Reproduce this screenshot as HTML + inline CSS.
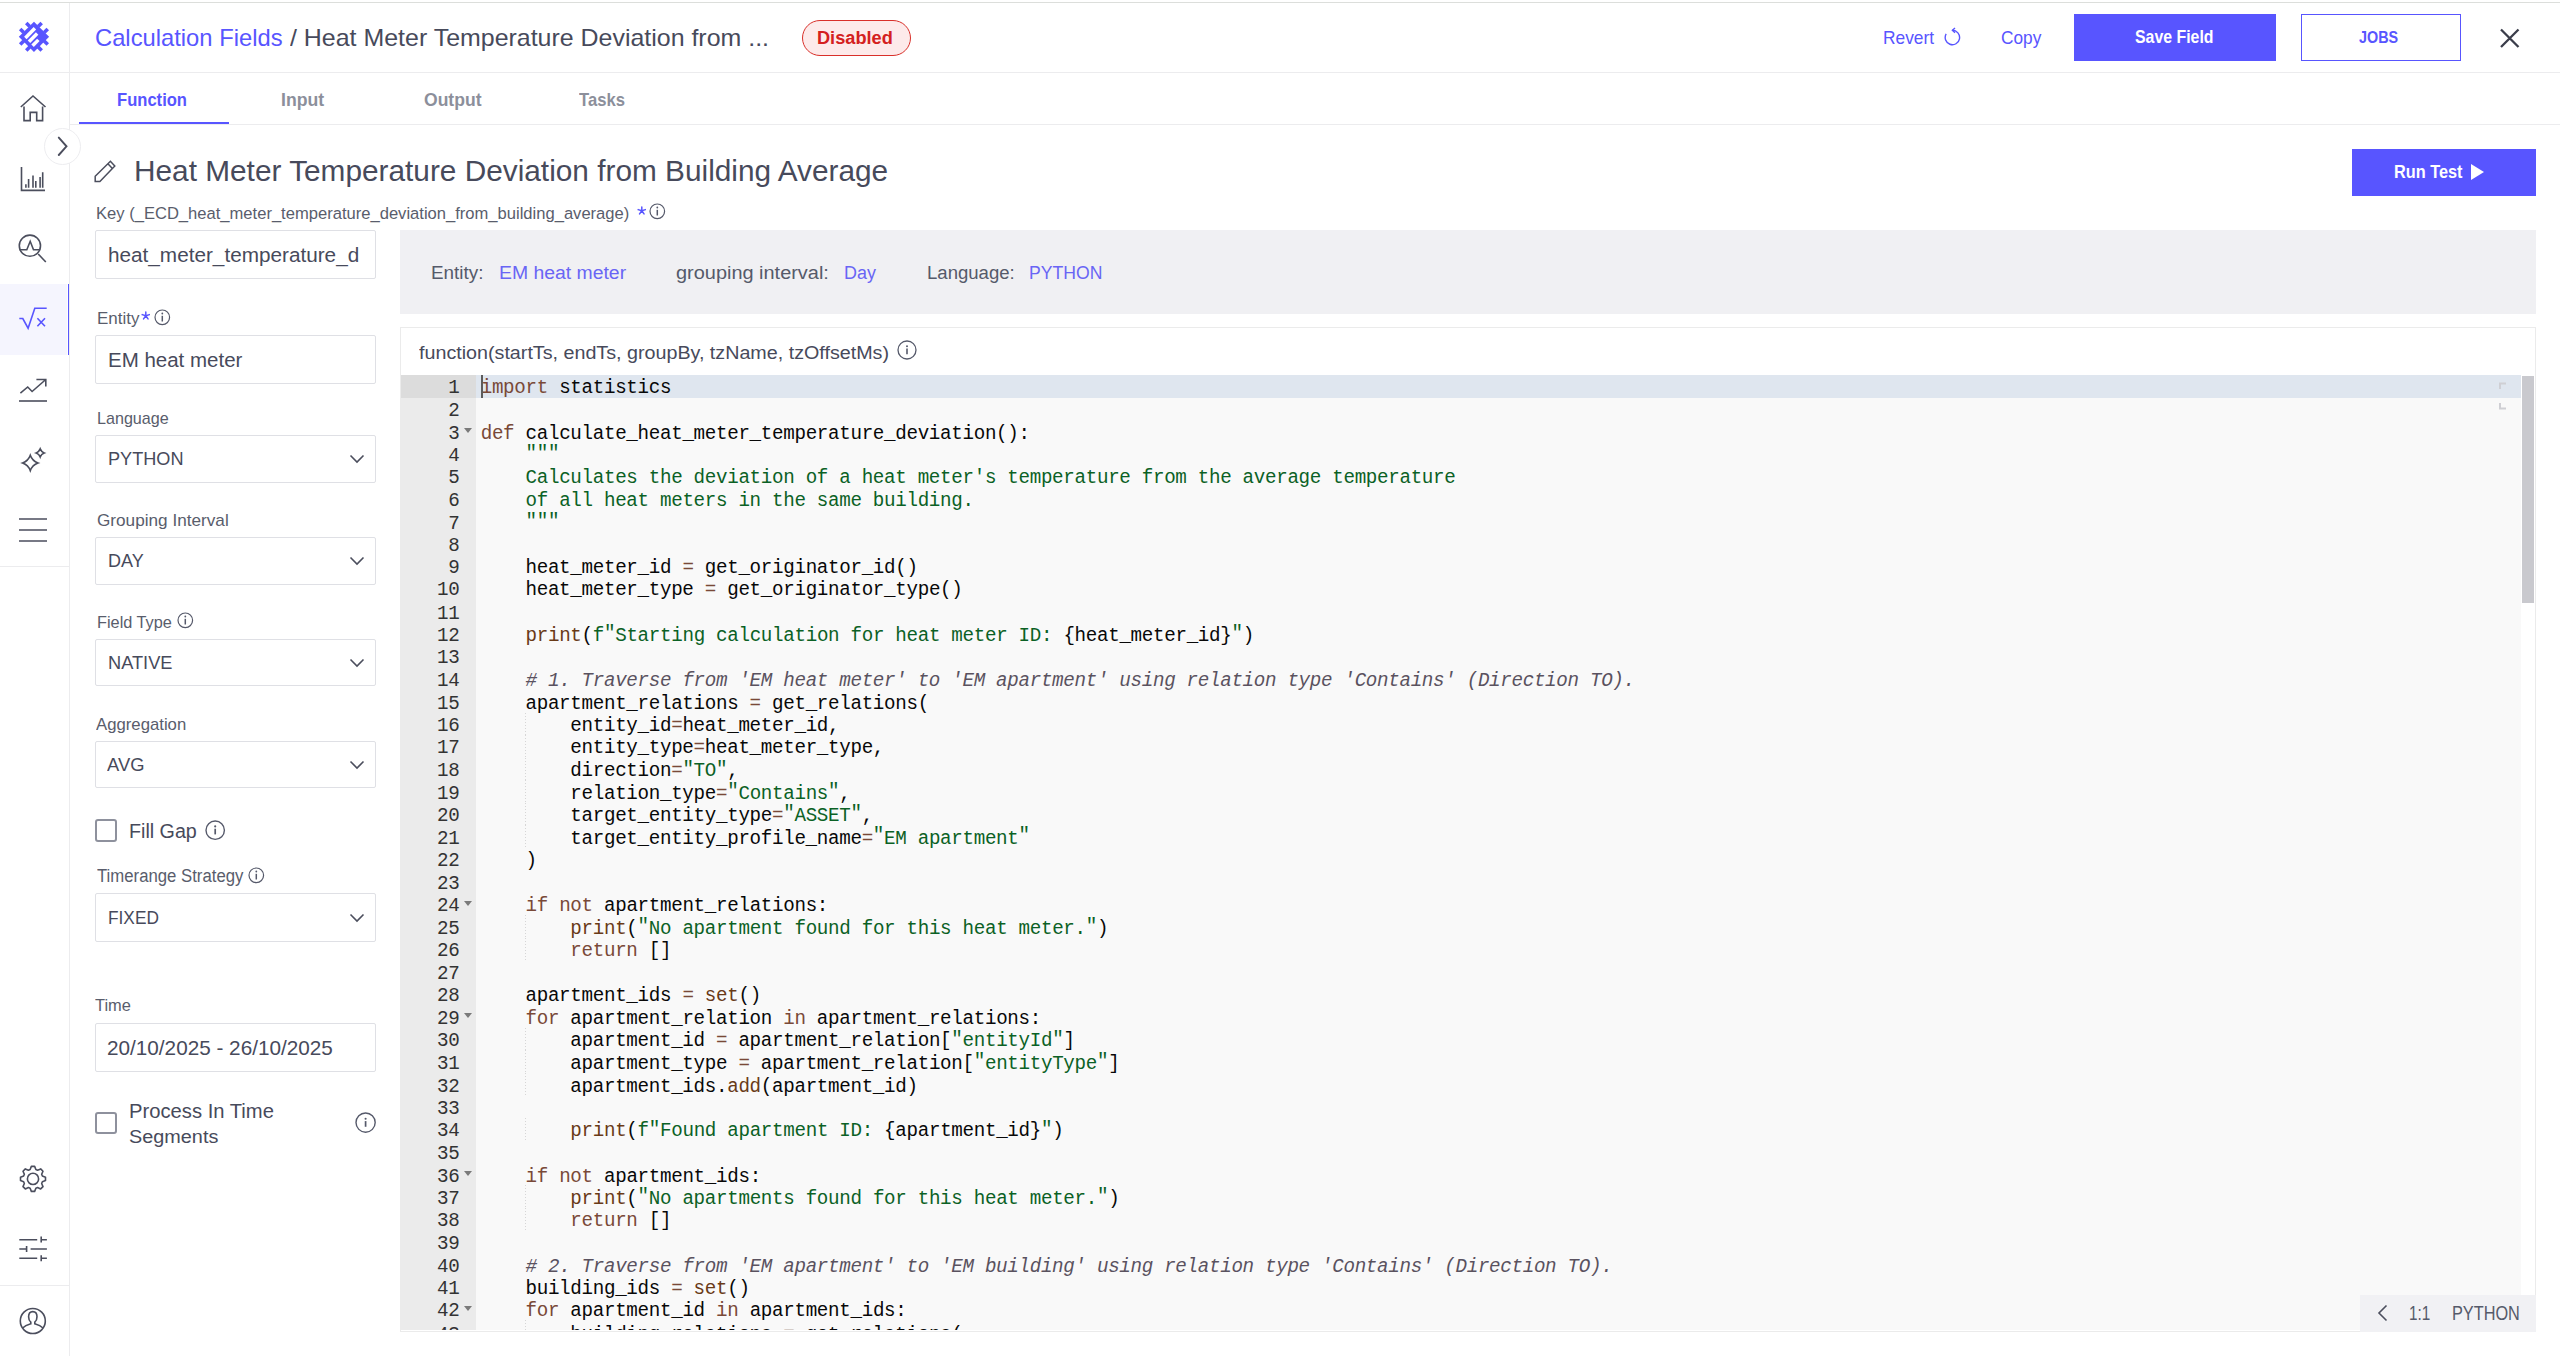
<!DOCTYPE html>
<html><head><meta charset="utf-8"><title>Calculation Field</title><style>
*{margin:0;padding:0}
html,body{width:2560px;height:1356px;overflow:hidden;background:#fff;position:relative;font-family:"Liberation Sans", sans-serif}
.r{position:absolute}
.t{position:absolute;white-space:nowrap;line-height:1;font-family:"Liberation Sans", sans-serif}
.gn{left:0;width:58.5px;text-align:right;font-family:"Liberation Mono", monospace;font-size:19.2px;letter-spacing:-0.31px;line-height:22.5px;color:#333;white-space:pre}
.cl{font-family:"Liberation Mono", monospace;font-size:19.2px;letter-spacing:-0.31px;line-height:22.5px;color:#080808;white-space:pre}
.q{font-style:normal;position:relative;top:-1.8px}
.k{color:#794938}
.f{color:#693a17}
.s{color:#0b6125}
.c{color:#5a525f;font-style:italic}
.guide{width:1px;background:repeating-linear-gradient(to bottom,#d6d6d6 0 1px,transparent 1px 3px)}
</style></head>
<body>
<div class="r" style="left:0px;top:2px;width:2560px;height:1px;background:#dcdedb"></div>
<div class="r" style="left:69px;top:3px;width:1px;height:1353px;background:#ececee"></div>
<div class="r" style="left:0px;top:72px;width:2560px;height:1px;background:#ececee"></div>
<div class="r" style="left:70px;top:124px;width:2490px;height:1px;background:#ececee"></div>
<div class="r" style="left:0px;top:566px;width:69px;height:1px;background:#ececee"></div>
<div class="r" style="left:0px;top:1285px;width:69px;height:1px;background:#ececee"></div>
<div class="r" style="left:0px;top:284px;width:67px;height:71px;background:#f5f5fe"></div>
<div class="r" style="left:68px;top:284px;width:1px;height:71px;background:#5855ff"></div>
<svg class="r" style="left:14px;top:17px" width="40" height="40" viewBox="0 0 40 40"><g transform="translate(19.97,19.76) rotate(45)"><rect x="-10.7" y="-10.7" width="21.40" height="21.40" fill="#5855ff"/><rect x="-6.05" y="10.2" width="3.55" height="5.00" fill="#5855ff"/><rect x="-6.05" y="-15.2" width="3.55" height="5.00" fill="#5855ff"/><rect x="10.2" y="-6.05" width="5.00" height="3.55" fill="#5855ff"/><rect x="-15.2" y="-6.05" width="5.00" height="3.55" fill="#5855ff"/><rect x="2.5" y="10.2" width="3.55" height="5.00" fill="#5855ff"/><rect x="2.5" y="-15.2" width="3.55" height="5.00" fill="#5855ff"/><rect x="10.2" y="2.5" width="5.00" height="3.55" fill="#5855ff"/><rect x="-15.2" y="2.5" width="5.00" height="3.55" fill="#5855ff"/><rect x="-7.05" y="-6.6" width="3.50" height="13.50" fill="#fff"/><rect x="-1.75" y="-4.5" width="3.50" height="11.50" fill="#fff"/><rect x="3.55" y="-0.9" width="3.50" height="8.20" fill="#fff"/></g></svg>
<svg class="r" style="left:19px;top:94px" width="28" height="28" viewBox="0 0 28 28"><path fill="none" stroke="#4b4e5d" stroke-width="1.6" d="M1.8 13 L14 2 L26.5 13 M5 12.5 V26.6 H11.2 V18.4 H17.7 V26.6 H23.6 V12.5" stroke-linejoin="miter"/></svg>
<svg class="r" style="left:19px;top:165px" width="28" height="28" viewBox="0 0 28 28"><path fill="none" stroke="#4b4e5d" stroke-width="1.6" d="M2.5 2 V25.4 H26"/><path fill="none" stroke="#4b4e5d" stroke-width="1.6" stroke-width="1.8" d="M6.9 22.7 V19.2 M9.6 22.7 V13.9 M14 22.7 V10.4 M16.8 22.7 V16.1 M21.1 22.7 V12.1 M23.7 22.7 V7.3"/></svg>
<svg class="r" style="left:17px;top:233px" width="32" height="32" viewBox="0 0 32 32"><circle fill="none" stroke="#4b4e5d" stroke-width="1.6" cx="12.9" cy="12.7" r="10.6"/><path fill="none" stroke="#4b4e5d" stroke-width="1.6" d="M21.2 21 L28.8 29"/><path fill="none" stroke="#4b4e5d" stroke-width="1.6" stroke-width="1.2" d="M2.5 16.7 H9.8 L13.2 8.3 L16.5 16.7 H23.3"/></svg>
<svg class="r" style="left:17px;top:305px" width="32" height="28" viewBox="0 0 32 28"><path fill="none" stroke="#5855ff" stroke-width="1.6" d="M2.3 13.5 H5.8 L11.1 23.2 L17.8 3.3 H29.7"/><path fill="none" stroke="#5855ff" stroke-width="1.6" d="M20.4 13.2 L28 21.2 M28 13.2 L20.4 21.2"/></svg>
<svg class="r" style="left:18px;top:376px" width="30" height="28" viewBox="0 0 30 28"><path fill="none" stroke="#4b4e5d" stroke-width="1.6" d="M1 25 H29"/><path fill="none" stroke="#4b4e5d" stroke-width="1.6" d="M2.4 17.2 L9.7 11 L14.1 15.5 L27.8 3.5 M18.4 3.5 H27.8 V10.6"/></svg>
<svg class="r" style="left:19px;top:446px" width="28" height="28" viewBox="0 0 28 28"><path fill="none" stroke="#4b4e5d" stroke-width="1.6" stroke-width="1.25" stroke-linejoin="miter" stroke-miterlimit="30" d="M11.3 9.3 Q13.3 15.0 19.0 17.0 Q13.3 19.0 11.3 24.7 Q9.3 19.0 3.6000000000000005 17.0 Q9.3 15.0 11.3 9.3 Z"/><path fill="none" stroke="#4b4e5d" stroke-width="1.6" stroke-width="1.2" stroke-linejoin="miter" stroke-miterlimit="30" d="M21.2 2.9000000000000004 Q22.3 5.800000000000001 25.2 6.9 Q22.3 8.0 21.2 10.9 Q20.099999999999998 8.0 17.2 6.9 Q20.099999999999998 5.800000000000001 21.2 2.9000000000000004 Z"/></svg>
<svg class="r" style="left:18px;top:516px" width="30" height="28" viewBox="0 0 30 28"><path fill="none" stroke="#4b4e5d" stroke-width="1.6" d="M1 3 H29 M1 14 H29 M1 25 H29" stroke-width="1.8"/></svg>
<svg class="r" style="left:18px;top:1164px" width="30" height="30" viewBox="0 0 30 30"><path fill="none" stroke="#4b4e5d" stroke-width="1.6" stroke-width="1.5" d="M12.13 5.53 L13.36 2.41 L16.64 2.41 L17.87 5.53 L19.60 6.25 L22.67 4.90 L25.00 7.23 L23.65 10.30 L24.37 12.03 L27.49 13.26 L27.49 16.54 L24.37 17.77 L23.65 19.50 L25.00 22.57 L22.67 24.90 L19.60 23.55 L17.87 24.27 L16.64 27.39 L13.36 27.39 L12.13 24.27 L10.40 23.55 L7.33 24.90 L5.00 22.57 L6.35 19.50 L5.63 17.77 L2.51 16.54 L2.51 13.26 L5.63 12.03 L6.35 10.30 L5.00 7.23 L7.33 4.90 L10.40 6.25 Z" stroke-linejoin="round"/><circle fill="none" stroke="#4b4e5d" stroke-width="1.6" stroke-width="1.5" cx="15" cy="14.9" r="5.6"/></svg>
<svg class="r" style="left:18px;top:1234px" width="30" height="30" viewBox="0 0 30 30"><path fill="none" stroke="#4b4e5d" stroke-width="1.6" stroke-width="1.9" d="M1.3 5.7 H19.2 M23.2 5.7 H28.9 M23.2 2.6 V8.4 M1.3 15 H9.3 M12.6 15 H28.9 M8.6 12 V18 M1.3 24.3 H19.2 M23.2 24.3 H28.9 M23.2 21.3 V27.2"/></svg>
<svg class="r" style="left:19px;top:1307px" width="28" height="28" viewBox="0 0 28 28"><circle fill="none" stroke="#4b4e5d" stroke-width="1.6" stroke-width="1.3" cx="13.8" cy="14" r="12.5"/><path fill="none" stroke="#4b4e5d" stroke-width="1.6" stroke-width="1.3" d="M13.8 4.6 C10.6 4.6 9.6 7.2 9.6 9.8 C9.6 12.4 10.8 14.4 11.8 15.2 V16.8 C8.4 17.8 5.6 19 3.6 21 M13.8 4.6 C17 4.6 18 7.2 18 9.8 C18 12.4 16.8 14.4 15.8 15.2 V16.8 C19.2 17.8 22 19 24 21"/></svg>
<div class="r" style="left:44.1px;top:128.1px;width:37.4px;height:37.4px;border-radius:50%;background:#fff;border:1px solid #ededf0;box-sizing:border-box"></div>
<svg class="r" style="left:55px;top:136px" width="20" height="20" viewBox="0 0 20 20"><path fill="none" stroke="#4b4e5d" stroke-width="1.9" stroke-linecap="round" d="M3.8 1.6 L11.5 10.3 L3.8 19"/></svg>
<div class="t " style="left:95.20px;top:26.00px;font-size:24.0px;color:#5855ff;letter-spacing:0px;transform:scaleX(0.9899);transform-origin:0 0;">Calculation Fields</div>
<div class="t " style="left:289.80px;top:26.00px;font-size:24.0px;color:#474a5b;letter-spacing:0px;transform:scaleX(1.0389);transform-origin:0 0;">/ Heat Meter Temperature Deviation from ...</div>
<div class="r" style="left:802px;top:20px;width:109px;height:36px;border-radius:18px;background:#fdeaea;border:1px solid #d9302a;box-sizing:border-box"></div>
<div class="t " style="left:816.80px;top:28.00px;font-size:19.2px;color:#d42020;font-weight:bold;letter-spacing:0px;transform:scaleX(0.9472);transform-origin:0 0;">Disabled</div>
<div class="t " style="left:1882.50px;top:28.00px;font-size:19.0px;color:#5855ff;letter-spacing:0px;transform:scaleX(0.913);transform-origin:0 0;">Revert</div>
<svg class="r" style="left:1942px;top:26px" width="20" height="20" viewBox="0 0 20 20"><path fill="none" stroke="#5855ff" stroke-width="1.4" d="M10.40 4.30 A7.2 7.2 0 1 1 4.16 7.90"/><path fill="none" stroke="#5855ff" stroke-width="1.4" d="M13.00 1.90 L10.40 4.30 L13.00 6.70"/></svg>
<div class="t " style="left:2000.80px;top:28.00px;font-size:19.0px;color:#5855ff;letter-spacing:0px;transform:scaleX(0.9085);transform-origin:0 0;">Copy</div>
<div class="r" style="left:2074px;top:14px;width:202px;height:47px;background:#5855ff"></div>
<div class="t " style="left:2134.70px;top:29.00px;font-size:17.9px;color:#ffffff;font-weight:bold;letter-spacing:0px;transform:scaleX(0.887);transform-origin:0 0;">Save Field</div>
<div class="r" style="left:2301px;top:14px;width:160px;height:47px;border:1.5px solid #5855ff;box-sizing:border-box"></div>
<div class="t " style="left:2359.10px;top:29.00px;font-size:17.0px;color:#5855ff;font-weight:bold;letter-spacing:0px;transform:scaleX(0.8445);transform-origin:0 0;">JOBS</div>
<svg class="r" style="left:2498px;top:26px" width="24" height="24" viewBox="0 0 24 24"><path fill="none" stroke="#3a3d4a" stroke-width="2.3" d="M3 3.5 L20.5 21 M20.5 3.5 L3 21"/></svg>
<div class="t " style="left:117.40px;top:90.00px;font-size:19.0px;color:#5855ff;font-weight:bold;letter-spacing:0px;transform:scaleX(0.8728);transform-origin:0 0;">Function</div>
<div class="t " style="left:281.00px;top:90.00px;font-size:19.0px;color:#8c8f9b;font-weight:bold;letter-spacing:0px;transform:scaleX(0.9284);transform-origin:0 0;">Input</div>
<div class="t " style="left:423.70px;top:90.00px;font-size:19.0px;color:#8c8f9b;font-weight:bold;letter-spacing:0px;transform:scaleX(0.9237);transform-origin:0 0;">Output</div>
<div class="t " style="left:579.00px;top:90.00px;font-size:19.0px;color:#8c8f9b;font-weight:bold;letter-spacing:0px;transform:scaleX(0.8748);transform-origin:0 0;">Tasks</div>
<div class="r" style="left:79px;top:122px;width:150px;height:2px;background:#5855ff"></div>
<svg class="r" style="left:93px;top:160px" width="24" height="24" viewBox="0 0 24 24"><path fill="none" stroke="#4b4e5d" stroke-width="1.5" stroke-linejoin="miter" d="M2.2 16.2 L17.4 1.3 L21.8 6.1 L6.9 21.4 H2.2 Z M14.9 3.8 L19.4 8.6"/></svg>
<div class="t " style="left:134.20px;top:156.00px;font-size:29.5px;color:#474a5b;letter-spacing:0px;transform:scaleX(1.0101);transform-origin:0 0;">Heat Meter Temperature Deviation from Building Average</div>
<div class="r" style="left:2352px;top:149px;width:184px;height:47px;background:#5855ff"></div>
<div class="t " style="left:2394.20px;top:164.00px;font-size:17.9px;color:#ffffff;font-weight:bold;letter-spacing:0px;transform:scaleX(0.9109);transform-origin:0 0;">Run Test</div>
<svg class="r" style="left:2470px;top:163px" width="16" height="18" viewBox="0 0 16 18"><path fill="#fff" d="M1 1 L14 9 L1 17 Z"/></svg>
<div class="t " style="left:96.30px;top:205.00px;font-size:17.1px;color:#595d6c;letter-spacing:0px;transform:scaleX(0.9693);transform-origin:0 0;">Key (_ECD_heat_meter_temperature_deviation_from_building_average)</div>
<svg class="r" style="left:636.7px;top:205.7px" width="9.6" height="9.6" viewBox="0 0 9.6 9.6"><path d="M4.8 4.8 L4.80 1.00 M4.8 4.8 L8.41 3.63 M4.8 4.8 L7.03 7.87 M4.8 4.8 L2.57 7.87 M4.8 4.8 L1.19 3.63 " stroke="#5855ff" stroke-width="1.5" stroke-linecap="round"/></svg>
<svg class="r" style="left:648.2px;top:202.2px" width="18.6" height="18.6" viewBox="0 0 18.6 18.6"><circle cx="9.3" cy="9.3" r="7.3" fill="none" stroke="#55596a" stroke-width="1.2"/><path d="M9.3 7.800000000000001 V13.5" stroke="#55596a" stroke-width="1.5"/><circle cx="9.3" cy="5.500000000000001" r="0.8999999999999999" fill="#55596a"/></svg>
<div class="r" style="left:95px;top:230px;width:281px;height:49px;border:1.5px solid #dfe0e5;border-radius:2px;box-sizing:border-box;background:#fff"></div>
<div class="t " style="left:107.70px;top:246.00px;font-size:19.3px;color:#474a5b;letter-spacing:0px;transform:scaleX(1.0751);transform-origin:0 0;">heat_meter_temperature_d</div>
<div class="t " style="left:96.50px;top:310.00px;font-size:17.2px;color:#595d6c;letter-spacing:0px;transform:scaleX(0.9887);transform-origin:0 0;">Entity</div>
<svg class="r" style="left:140.7px;top:310.7px" width="9.6" height="9.6" viewBox="0 0 9.6 9.6"><path d="M4.8 4.8 L4.80 1.00 M4.8 4.8 L8.41 3.63 M4.8 4.8 L7.03 7.87 M4.8 4.8 L2.57 7.87 M4.8 4.8 L1.19 3.63 " stroke="#5855ff" stroke-width="1.5" stroke-linecap="round"/></svg>
<svg class="r" style="left:152.7px;top:307.7px" width="18.6" height="18.6" viewBox="0 0 18.6 18.6"><circle cx="9.3" cy="9.3" r="7.3" fill="none" stroke="#55596a" stroke-width="1.2"/><path d="M9.3 7.800000000000001 V13.5" stroke="#55596a" stroke-width="1.5"/><circle cx="9.3" cy="5.500000000000001" r="0.8999999999999999" fill="#55596a"/></svg>
<div class="r" style="left:95px;top:335px;width:281px;height:49px;border:1.5px solid #dfe0e5;border-radius:2px;box-sizing:border-box;background:#fff"></div>
<div class="t " style="left:108.30px;top:351.00px;font-size:19.3px;color:#474a5b;letter-spacing:0px;transform:scaleX(1.0628);transform-origin:0 0;">EM heat meter</div>
<div class="t " style="left:96.50px;top:410.00px;font-size:17.0px;color:#595d6c;letter-spacing:0px;transform:scaleX(0.9479);transform-origin:0 0;">Language</div>
<div class="r" style="left:95px;top:435.4px;width:281px;height:47.200000000000045px;border:1.5px solid #dfe0e5;border-radius:2px;box-sizing:border-box;background:#fff"></div>
<div class="t " style="left:108.40px;top:450.00px;font-size:18.9px;color:#474a5b;letter-spacing:0px;transform:scaleX(0.9591);transform-origin:0 0;">PYTHON</div>
<svg class="r" style="left:348px;top:453.0px" width="18" height="12" viewBox="0 0 18 12"><path fill="none" stroke="#4b4e5d" stroke-width="1.6" d="M2.5 2.5 L9 9 L15.5 2.5"/></svg>
<div class="t " style="left:96.50px;top:512.00px;font-size:17.0px;color:#595d6c;letter-spacing:0px;transform:scaleX(1.0099);transform-origin:0 0;">Grouping Interval</div>
<div class="r" style="left:95px;top:537.4px;width:281px;height:47.200000000000045px;border:1.5px solid #dfe0e5;border-radius:2px;box-sizing:border-box;background:#fff"></div>
<div class="t " style="left:108.40px;top:552.00px;font-size:18.9px;color:#474a5b;letter-spacing:0px;transform:scaleX(0.9536);transform-origin:0 0;">DAY</div>
<svg class="r" style="left:348px;top:555.0px" width="18" height="12" viewBox="0 0 18 12"><path fill="none" stroke="#4b4e5d" stroke-width="1.6" d="M2.5 2.5 L9 9 L15.5 2.5"/></svg>
<div class="t " style="left:96.50px;top:614.00px;font-size:17.0px;color:#595d6c;letter-spacing:0px;transform:scaleX(0.9587);transform-origin:0 0;">Field Type</div>
<svg class="r" style="left:176.29999999999998px;top:611.0px" width="18.6" height="18.6" viewBox="0 0 18.6 18.6"><circle cx="9.3" cy="9.3" r="7.3" fill="none" stroke="#55596a" stroke-width="1.2"/><path d="M9.3 7.800000000000001 V13.5" stroke="#55596a" stroke-width="1.5"/><circle cx="9.3" cy="5.500000000000001" r="0.8999999999999999" fill="#55596a"/></svg>
<div class="r" style="left:95px;top:639.2px;width:281px;height:47.19999999999993px;border:1.5px solid #dfe0e5;border-radius:2px;box-sizing:border-box;background:#fff"></div>
<div class="t " style="left:108.40px;top:654.00px;font-size:18.9px;color:#474a5b;letter-spacing:0px;transform:scaleX(0.9652);transform-origin:0 0;">NATIVE</div>
<svg class="r" style="left:348px;top:656.8px" width="18" height="12" viewBox="0 0 18 12"><path fill="none" stroke="#4b4e5d" stroke-width="1.6" d="M2.5 2.5 L9 9 L15.5 2.5"/></svg>
<div class="t " style="left:95.90px;top:716.00px;font-size:17.0px;color:#595d6c;letter-spacing:0px;transform:scaleX(0.9838);transform-origin:0 0;">Aggregation</div>
<div class="r" style="left:95px;top:741.3px;width:281px;height:47.200000000000045px;border:1.5px solid #dfe0e5;border-radius:2px;box-sizing:border-box;background:#fff"></div>
<div class="t " style="left:107.20px;top:756.00px;font-size:18.9px;color:#474a5b;letter-spacing:0px;transform:scaleX(0.9718);transform-origin:0 0;">AVG</div>
<svg class="r" style="left:348px;top:758.9px" width="18" height="12" viewBox="0 0 18 12"><path fill="none" stroke="#4b4e5d" stroke-width="1.6" d="M2.5 2.5 L9 9 L15.5 2.5"/></svg>
<div class="r" style="left:95px;top:819px;width:22px;height:23px;border:2px solid #8e919d;border-radius:3px;box-sizing:border-box"></div>
<div class="t " style="left:129.40px;top:822.00px;font-size:19.6px;color:#474a5b;letter-spacing:0px;transform:scaleX(1.0044);transform-origin:0 0;">Fill Gap</div>
<svg class="r" style="left:203.8px;top:819.3px" width="22.4" height="22.4" viewBox="0 0 22.4 22.4"><circle cx="11.2" cy="11.2" r="9.2" fill="none" stroke="#55596a" stroke-width="1.4"/><path d="M11.2 9.7 V15.399999999999999" stroke="#55596a" stroke-width="1.7"/><circle cx="11.2" cy="7.3999999999999995" r="1.0499999999999998" fill="#55596a"/></svg>
<div class="t " style="left:96.50px;top:868.00px;font-size:17.6px;color:#595d6c;letter-spacing:0px;transform:scaleX(0.9515);transform-origin:0 0;">Timerange Strategy</div>
<svg class="r" style="left:247.2px;top:865.7px" width="18.6" height="18.6" viewBox="0 0 18.6 18.6"><circle cx="9.3" cy="9.3" r="7.3" fill="none" stroke="#55596a" stroke-width="1.2"/><path d="M9.3 7.800000000000001 V13.5" stroke="#55596a" stroke-width="1.5"/><circle cx="9.3" cy="5.500000000000001" r="0.8999999999999999" fill="#55596a"/></svg>
<div class="r" style="left:95px;top:893px;width:281px;height:49px;border:1.5px solid #dfe0e5;border-radius:2px;box-sizing:border-box;background:#fff"></div>
<div class="t " style="left:108.00px;top:909.00px;font-size:18.9px;color:#474a5b;letter-spacing:0px;transform:scaleX(0.9151);transform-origin:0 0;">FIXED</div>
<svg class="r" style="left:348px;top:911.5px" width="18" height="12" viewBox="0 0 18 12"><path fill="none" stroke="#4b4e5d" stroke-width="1.6" d="M2.5 2.5 L9 9 L15.5 2.5"/></svg>
<div class="t " style="left:95.30px;top:997.00px;font-size:16.1px;color:#595d6c;letter-spacing:0px;transform:scaleX(1.0207);transform-origin:0 0;">Time</div>
<div class="r" style="left:95px;top:1023px;width:281px;height:49px;border:1.5px solid #dfe0e5;border-radius:2px;box-sizing:border-box;background:#fff"></div>
<div class="t " style="left:107.00px;top:1039.00px;font-size:19.8px;color:#474a5b;letter-spacing:0px;transform:scaleX(1.0475);transform-origin:0 0;">20/10/2025 - 26/10/2025</div>
<div class="r" style="left:95px;top:1112px;width:22px;height:22px;border:2px solid #8e919d;border-radius:3px;box-sizing:border-box"></div>
<div class="t " style="left:129.20px;top:1102.00px;font-size:19.5px;color:#474a5b;letter-spacing:0px;transform:scaleX(1.0365);transform-origin:0 0;">Process In Time</div>
<div class="t " style="left:129.20px;top:1128.00px;font-size:18.9px;color:#474a5b;letter-spacing:0px;transform:scaleX(1.05);transform-origin:0 0;">Segments</div>
<svg class="r" style="left:354.4px;top:1111.2px" width="23.2" height="23.2" viewBox="0 0 23.2 23.2"><circle cx="11.6" cy="11.6" r="9.6" fill="none" stroke="#55596a" stroke-width="1.4"/><path d="M11.6 10.1 V15.8" stroke="#55596a" stroke-width="1.7"/><circle cx="11.6" cy="7.8" r="1.0499999999999998" fill="#55596a"/></svg>
<div class="r" style="left:400px;top:230px;width:2136px;height:84px;background:#f0f0f3"></div>
<div class="t " style="left:431.40px;top:264.00px;font-size:18.8px;color:#555a6a;letter-spacing:0px;transform:scaleX(1.0051);transform-origin:0 0;">Entity:</div>
<div class="t " style="left:498.50px;top:264.00px;font-size:18.8px;color:#6965f5;letter-spacing:0px;transform:scaleX(1.0319);transform-origin:0 0;">EM heat meter</div>
<div class="t " style="left:676.40px;top:264.00px;font-size:18.8px;color:#555a6a;letter-spacing:0px;transform:scaleX(1.061);transform-origin:0 0;">grouping interval:</div>
<div class="t " style="left:843.90px;top:264.00px;font-size:18.8px;color:#6965f5;letter-spacing:0px;transform:scaleX(0.9545);transform-origin:0 0;">Day</div>
<div class="t " style="left:927.20px;top:264.00px;font-size:18.8px;color:#555a6a;letter-spacing:0px;transform:scaleX(0.9881);transform-origin:0 0;">Language:</div>
<div class="t " style="left:1028.80px;top:264.00px;font-size:18.8px;color:#6965f5;letter-spacing:0px;transform:scaleX(0.9371);transform-origin:0 0;">PYTHON</div>
<div class="r" style="left:400px;top:327px;width:2136px;height:1005px;border:1px solid #ebebeb;box-sizing:border-box;background:#fff"></div>
<div class="t " style="left:419.20px;top:344.00px;font-size:18.9px;color:#474a5b;letter-spacing:0px;transform:scaleX(1.0427);transform-origin:0 0;">function(startTs, endTs, groupBy, tzName, tzOffsetMs)</div>
<svg class="r" style="left:895.5px;top:338.5px" width="22.0" height="22.0" viewBox="0 0 22.0 22.0"><circle cx="11.0" cy="11.0" r="9.0" fill="none" stroke="#55596a" stroke-width="1.3"/><path d="M11.0 9.5 V15.2" stroke="#55596a" stroke-width="1.6"/><circle cx="11.0" cy="7.2" r="0.9750000000000001" fill="#55596a"/></svg>
<div class="r" style="left:401px;top:375px;width:75px;height:955px;background:#ebebeb"></div>
<div class="r" style="left:476px;top:375px;width:2045px;height:955px;background:#f9f9f9"></div>
<div class="r" style="left:401px;top:375px;width:75px;height:23px;background:#dcdcdc"></div>
<div class="r" style="left:476px;top:375px;width:2045px;height:23px;background:#dfe6ef"></div>
<div class="r" style="left:2521px;top:375px;width:14px;height:920px;background:#ffffff"></div>
<div class="r" style="left:2522px;top:376px;width:12px;height:227px;background:#c9c9ce"></div>
<div class="r" style="left:2360px;top:1295px;width:176px;height:37px;background:#f1f1f4"></div>
<div class="r" style="left:401px;top:375px;width:2120px;height:955px;overflow:hidden">
<div class="r guide" style="left:124.04px;top:337.50px;height:22.5px"></div>
<div class="r guide" style="left:124.04px;top:360.00px;height:22.5px"></div>
<div class="r guide" style="left:124.04px;top:382.50px;height:22.5px"></div>
<div class="r guide" style="left:124.04px;top:405.00px;height:22.5px"></div>
<div class="r guide" style="left:124.04px;top:427.50px;height:22.5px"></div>
<div class="r guide" style="left:124.04px;top:450.00px;height:22.5px"></div>
<div class="r guide" style="left:124.04px;top:540.00px;height:22.5px"></div>
<div class="r guide" style="left:124.04px;top:562.50px;height:22.5px"></div>
<div class="r guide" style="left:124.04px;top:652.50px;height:22.5px"></div>
<div class="r guide" style="left:124.04px;top:675.00px;height:22.5px"></div>
<div class="r guide" style="left:124.04px;top:697.50px;height:22.5px"></div>
<div class="r guide" style="left:124.04px;top:742.50px;height:22.5px"></div>
<div class="r guide" style="left:124.04px;top:810.00px;height:22.5px"></div>
<div class="r guide" style="left:124.04px;top:832.50px;height:22.5px"></div>
<div class="r guide" style="left:124.04px;top:945.00px;height:22.5px"></div>
<div class="r" style="left:0;top:0;width:2120px;height:900.94px;transform:scaleY(1.06);transform-origin:0 0">
<div class="r gn" style="top:1.28px">1</div>
<div class="r cl" style="left:79.70px;top:1.28px"><span class="k">import</span><span class="p"> statistics</span></div>
<div class="r gn" style="top:22.52px">2</div>
<div class="r cl" style="left:79.70px;top:22.52px"></div>
<div class="r gn" style="top:43.77px">3</div>
<div class="r cl" style="left:79.70px;top:43.77px"><span class="k">def</span><span class="p"> calculate_heat_meter_temperature_deviation():</span></div>
<div class="r gn" style="top:65.02px">4</div>
<div class="r cl" style="left:79.70px;top:65.02px"><span class="p">    </span><span class="s"><i class="q">&quot;</i><i class="q">&quot;</i><i class="q">&quot;</i></span></div>
<div class="r gn" style="top:86.26px">5</div>
<div class="r cl" style="left:79.70px;top:86.26px"><span class="p">    </span><span class="s">Calculates the deviation of a heat meter&#x27;s temperature from the average temperature</span></div>
<div class="r gn" style="top:107.51px">6</div>
<div class="r cl" style="left:79.70px;top:107.51px"><span class="p">    </span><span class="s">of all heat meters in the same building.</span></div>
<div class="r gn" style="top:128.75px">7</div>
<div class="r cl" style="left:79.70px;top:128.75px"><span class="p">    </span><span class="s"><i class="q">&quot;</i><i class="q">&quot;</i><i class="q">&quot;</i></span></div>
<div class="r gn" style="top:150.00px">8</div>
<div class="r cl" style="left:79.70px;top:150.00px"></div>
<div class="r gn" style="top:171.24px">9</div>
<div class="r cl" style="left:79.70px;top:171.24px"><span class="p">    heat_meter_id </span><span class="k">=</span><span class="p"> get_originator_id()</span></div>
<div class="r gn" style="top:192.49px">10</div>
<div class="r cl" style="left:79.70px;top:192.49px"><span class="p">    heat_meter_type </span><span class="k">=</span><span class="p"> get_originator_type()</span></div>
<div class="r gn" style="top:213.73px">11</div>
<div class="r cl" style="left:79.70px;top:213.73px"></div>
<div class="r gn" style="top:234.98px">12</div>
<div class="r cl" style="left:79.70px;top:234.98px"><span class="p">    </span><span class="f">print</span><span class="p">(</span><span class="s">f<i class="q">&quot;</i>Starting calculation for heat meter ID: </span><span class="p">{heat_meter_id}</span><span class="s"><i class="q">&quot;</i></span><span class="p">)</span></div>
<div class="r gn" style="top:256.22px">13</div>
<div class="r cl" style="left:79.70px;top:256.22px"></div>
<div class="r gn" style="top:277.47px">14</div>
<div class="r cl" style="left:79.70px;top:277.47px"><span class="p">    </span><span class="c"># 1. Traverse from &#x27;EM heat meter&#x27; to &#x27;EM apartment&#x27; using relation type &#x27;Contains&#x27; (Direction TO).</span></div>
<div class="r gn" style="top:298.71px">15</div>
<div class="r cl" style="left:79.70px;top:298.71px"><span class="p">    apartment_relations </span><span class="k">=</span><span class="p"> get_relations(</span></div>
<div class="r gn" style="top:319.96px">16</div>
<div class="r cl" style="left:79.70px;top:319.96px"><span class="p">        entity_id</span><span class="k">=</span><span class="p">heat_meter_id,</span></div>
<div class="r gn" style="top:341.20px">17</div>
<div class="r cl" style="left:79.70px;top:341.20px"><span class="p">        entity_type</span><span class="k">=</span><span class="p">heat_meter_type,</span></div>
<div class="r gn" style="top:362.45px">18</div>
<div class="r cl" style="left:79.70px;top:362.45px"><span class="p">        direction</span><span class="k">=</span><span class="s"><i class="q">&quot;</i>TO<i class="q">&quot;</i></span><span class="p">,</span></div>
<div class="r gn" style="top:383.69px">19</div>
<div class="r cl" style="left:79.70px;top:383.69px"><span class="p">        relation_type</span><span class="k">=</span><span class="s"><i class="q">&quot;</i>Contains<i class="q">&quot;</i></span><span class="p">,</span></div>
<div class="r gn" style="top:404.94px">20</div>
<div class="r cl" style="left:79.70px;top:404.94px"><span class="p">        target_entity_type</span><span class="k">=</span><span class="s"><i class="q">&quot;</i>ASSET<i class="q">&quot;</i></span><span class="p">,</span></div>
<div class="r gn" style="top:426.19px">21</div>
<div class="r cl" style="left:79.70px;top:426.19px"><span class="p">        target_entity_profile_name</span><span class="k">=</span><span class="s"><i class="q">&quot;</i>EM apartment<i class="q">&quot;</i></span></div>
<div class="r gn" style="top:447.43px">22</div>
<div class="r cl" style="left:79.70px;top:447.43px"><span class="p">    )</span></div>
<div class="r gn" style="top:468.68px">23</div>
<div class="r cl" style="left:79.70px;top:468.68px"></div>
<div class="r gn" style="top:489.92px">24</div>
<div class="r cl" style="left:79.70px;top:489.92px"><span class="p">    </span><span class="k">if</span><span class="p"> </span><span class="k">not</span><span class="p"> apartment_relations:</span></div>
<div class="r gn" style="top:511.17px">25</div>
<div class="r cl" style="left:79.70px;top:511.17px"><span class="p">        </span><span class="f">print</span><span class="p">(</span><span class="s"><i class="q">&quot;</i>No apartment found for this heat meter.<i class="q">&quot;</i></span><span class="p">)</span></div>
<div class="r gn" style="top:532.41px">26</div>
<div class="r cl" style="left:79.70px;top:532.41px"><span class="p">        </span><span class="k">return</span><span class="p"> []</span></div>
<div class="r gn" style="top:553.66px">27</div>
<div class="r cl" style="left:79.70px;top:553.66px"></div>
<div class="r gn" style="top:574.90px">28</div>
<div class="r cl" style="left:79.70px;top:574.90px"><span class="p">    apartment_ids </span><span class="k">=</span><span class="p"> </span><span class="f">set</span><span class="p">()</span></div>
<div class="r gn" style="top:596.15px">29</div>
<div class="r cl" style="left:79.70px;top:596.15px"><span class="p">    </span><span class="k">for</span><span class="p"> apartment_relation </span><span class="k">in</span><span class="p"> apartment_relations:</span></div>
<div class="r gn" style="top:617.39px">30</div>
<div class="r cl" style="left:79.70px;top:617.39px"><span class="p">        apartment_id </span><span class="k">=</span><span class="p"> apartment_relation[</span><span class="s"><i class="q">&quot;</i>entityId<i class="q">&quot;</i></span><span class="p">]</span></div>
<div class="r gn" style="top:638.64px">31</div>
<div class="r cl" style="left:79.70px;top:638.64px"><span class="p">        apartment_type </span><span class="k">=</span><span class="p"> apartment_relation[</span><span class="s"><i class="q">&quot;</i>entityType<i class="q">&quot;</i></span><span class="p">]</span></div>
<div class="r gn" style="top:659.88px">32</div>
<div class="r cl" style="left:79.70px;top:659.88px"><span class="p">        apartment_ids.</span><span class="f">add</span><span class="p">(apartment_id)</span></div>
<div class="r gn" style="top:681.13px">33</div>
<div class="r cl" style="left:79.70px;top:681.13px"></div>
<div class="r gn" style="top:702.37px">34</div>
<div class="r cl" style="left:79.70px;top:702.37px"><span class="p">        </span><span class="f">print</span><span class="p">(</span><span class="s">f<i class="q">&quot;</i>Found apartment ID: </span><span class="p">{apartment_id}</span><span class="s"><i class="q">&quot;</i></span><span class="p">)</span></div>
<div class="r gn" style="top:723.62px">35</div>
<div class="r cl" style="left:79.70px;top:723.62px"></div>
<div class="r gn" style="top:744.86px">36</div>
<div class="r cl" style="left:79.70px;top:744.86px"><span class="p">    </span><span class="k">if</span><span class="p"> </span><span class="k">not</span><span class="p"> apartment_ids:</span></div>
<div class="r gn" style="top:766.11px">37</div>
<div class="r cl" style="left:79.70px;top:766.11px"><span class="p">        </span><span class="f">print</span><span class="p">(</span><span class="s"><i class="q">&quot;</i>No apartments found for this heat meter.<i class="q">&quot;</i></span><span class="p">)</span></div>
<div class="r gn" style="top:787.35px">38</div>
<div class="r cl" style="left:79.70px;top:787.35px"><span class="p">        </span><span class="k">return</span><span class="p"> []</span></div>
<div class="r gn" style="top:808.60px">39</div>
<div class="r cl" style="left:79.70px;top:808.60px"></div>
<div class="r gn" style="top:829.85px">40</div>
<div class="r cl" style="left:79.70px;top:829.85px"><span class="p">    </span><span class="c"># 2. Traverse from &#x27;EM apartment&#x27; to &#x27;EM building&#x27; using relation type &#x27;Contains&#x27; (Direction TO).</span></div>
<div class="r gn" style="top:851.09px">41</div>
<div class="r cl" style="left:79.70px;top:851.09px"><span class="p">    building_ids </span><span class="k">=</span><span class="p"> </span><span class="f">set</span><span class="p">()</span></div>
<div class="r gn" style="top:872.34px">42</div>
<div class="r cl" style="left:79.70px;top:872.34px"><span class="p">    </span><span class="k">for</span><span class="p"> apartment_id </span><span class="k">in</span><span class="p"> apartment_ids:</span></div>
<div class="r gn" style="top:893.58px">43</div>
<div class="r cl" style="left:79.70px;top:893.58px"><span class="p">        building_relations </span><span class="k">=</span><span class="p"> get_relations(</span></div>
</div>
<svg class="r" style="left:63px;top:53.0px" width="9" height="6"><path d="M0 0 H8 L4 5 Z" fill="#7a7a7a"/></svg>
<svg class="r" style="left:63px;top:795.5px" width="9" height="6"><path d="M0 0 H8 L4 5 Z" fill="#7a7a7a"/></svg>
<svg class="r" style="left:63px;top:525.5px" width="9" height="6"><path d="M0 0 H8 L4 5 Z" fill="#7a7a7a"/></svg>
<svg class="r" style="left:63px;top:930.5px" width="9" height="6"><path d="M0 0 H8 L4 5 Z" fill="#7a7a7a"/></svg>
<svg class="r" style="left:63px;top:638.0px" width="9" height="6"><path d="M0 0 H8 L4 5 Z" fill="#7a7a7a"/></svg>
<div class="r" style="left:80px;top:0px;width:2px;height:23px;background:#5c5c5c"></div>
</div>
<svg class="r" style="left:2497px;top:380px" width="14" height="32" viewBox="0 0 14 32"><path fill="none" stroke="#cfcfd4" stroke-width="2" d="M3 9 V3.5 H9 M3 23 V28.5 H9"/></svg>
<svg class="r" style="left:2376px;top:1304px" width="14" height="18" viewBox="0 0 14 18"><path fill="none" stroke="#4b4e5d" stroke-width="1.6" d="M10.5 1.5 L3 9 L10.5 16.5"/></svg>
<div class="t " style="left:2408.70px;top:1304.00px;font-size:19.8px;color:#555a6a;letter-spacing:0px;transform:scaleX(0.7741);transform-origin:0 0;">1:1</div>
<div class="t " style="left:2452.40px;top:1304.00px;font-size:19.8px;color:#555a6a;letter-spacing:0px;transform:scaleX(0.823);transform-origin:0 0;">PYTHON</div>
</body></html>
